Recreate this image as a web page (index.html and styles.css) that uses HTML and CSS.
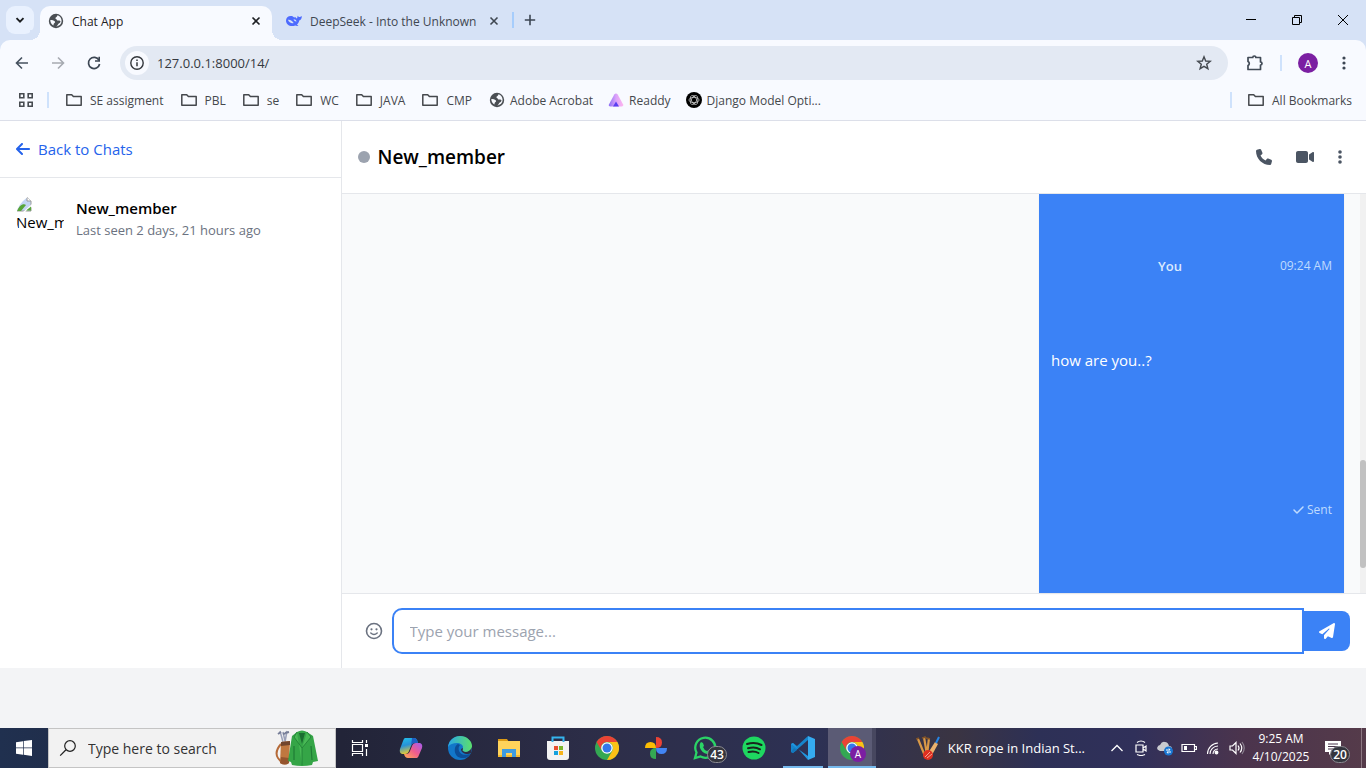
FILE: index.html
```html
<!DOCTYPE html>
<html lang="en">
<head>
<meta charset="utf-8">
<title>Chat App</title>
<link rel="stylesheet" href="styles.css">
</head>
<body>
<svg class="defs" aria-hidden="true">
  <symbol id="folder" viewBox="0 0 16 16"><path d="M.8 2.700h4.900l1.700 1.900h7.800v8.700H.8z" fill="none" stroke="currentColor" stroke-width="1.500" stroke-linejoin="round"/></symbol>
  <symbol id="close" viewBox="0 0 10 10"><path d="M1.500 1.500l7 7M8.500 1.500l-7 7" stroke="currentColor" stroke-width="1.600"/></symbol>
  <symbol id="globe" viewBox="0 0 16 16"><circle cx="8" cy="8" r="7.200" fill="#4b4f54"/><path d="M9.500 2.200c-.3 1.900-1.800 1.600-2.100 2.900-.2 1 1.100 1 1.500 1.900.4.900 1.500.5 2.400.4.900 0 1.400.8 1.100 1.700-.4 1.400-1.900 1.200-2.500 2.500-.2.700-.6 1.500-1.900 1.600 3.100.2 5.600-2.300 5.600-5.500 0-2.500-1.700-4.800-4.100-5.500z" fill="#f8faff"/><path d="M2.300 7.100c1.500-.3 2.900.1 4 .8 1.200.7.900 1.900-.1 2.300-.8.400-.5 1.300-.8 2.200-1.900-.9-3.100-2.900-3.100-5.300z" fill="#f8faff"/></symbol>
  <symbol id="chrome" viewBox="0 0 24 24"><circle cx="12" cy="12" r="12" fill="#34a853"/><path d="M1.600 6A12 12 0 0 1 22.400 6H12a6 6 0 0 0-5.200 9z" fill="#ea4335"/><path d="M22.400 6A12 12 0 0 1 12 24l5.200-9A6 6 0 0 0 12 6z" fill="#fbc116"/><circle cx="12" cy="12" r="5.800" fill="#fff"/><circle cx="12" cy="12" r="4.500" fill="#3478eb"/></symbol>
  <symbol id="dots" viewBox="0 0 16 16"><circle cx="8" cy="3" r="1.600"/><circle cx="8" cy="8" r="1.600"/><circle cx="8" cy="13" r="1.600"/></symbol>
</svg>

<header class="browser">
  <div class="tabs">
    <button class="tab-search" aria-label="Search tabs"><svg class="i10" viewBox="0 0 10 10"><path d="M1.500 3.200L5 6.700l3.500-3.500" fill="none" stroke="currentColor" stroke-width="1.900"/></svg></button>
    <div class="tab active"><svg class="i16"><use href="#globe"/></svg><span>Chat App</span><button aria-label="Close tab"><svg class="i10"><use href="#close"/></svg></button></div>
    <div class="tab"><svg class="i16" viewBox="0 0 16 16" fill="#4d6bfe"><path d="M0 7.500C0 4.700 2.100 2.900 5 3c1.200 0 1.900.6 2.900 1.200.7.400 1 .2.900-.5 1.100.5 1.200 1.500 2.200 1.700.5-.9.300-1.900.9-2.600.6 1 .8 1.300 1.700 1.200 1-.1 1.300-.8 2.200-.8.100 2.400-1 3.700-2.600 4.300-.2 1.900-1.100 3-2.200 3.900.5.700 1.200.8 1.800 1.100-1.300.7-2.600.4-3.500-.1C4.800 14.200 0 12.200 0 7.500z"/><path d="M1.900 6.800c2.600-.3 4.400 1.200 5.800 3.200-1.800 1-4.800-.5-5.800-3.200z" fill="#d6e2f6"/><path d="M7.500 6.300c1.700 0 2.700.8 3 2.100-.8.400-2.200-.2-3-2.100z" fill="#d6e2f6"/></svg><span>DeepSeek - Into the Unknown</span><button aria-label="Close tab"><svg class="i10"><use href="#close"/></svg></button></div>
    <span class="tab-line"></span>
    <button class="new-tab" aria-label="New tab"><svg class="i12" viewBox="0 0 12 12"><path d="M6 .8v10.400M.8 6h10.400" stroke="currentColor" stroke-width="1.600"/></svg></button>
    <div class="window-controls">
      <button aria-label="Minimize"><svg class="i12" viewBox="0 0 12 12"><path d="M1 5.500h10" stroke="currentColor"/></svg></button>
      <button aria-label="Restore"><svg class="i12" viewBox="0 0 12 12" fill="none" stroke="currentColor"><path d="M1.500 3.500h7v7h-7zM3.500 3.500v-2h7v7h-2"/></svg></button>
      <button aria-label="Close window"><svg class="i12" viewBox="0 0 12 12"><path d="M1 1l10 10M11 1L1 11" stroke="currentColor"/></svg></button>
    </div>
  </div>
  <div class="toolbar">
    <button aria-label="Back"><svg class="i16" viewBox="0 0 16 16" fill="none" stroke="#45515f" stroke-width="1.600"><path d="M14 8H2.500M8 2.500L2.500 8 8 13.500"/></svg></button>
    <button aria-label="Forward"><svg class="i16" viewBox="0 0 16 16" fill="none" stroke="#a6aab1" stroke-width="1.600"><path d="M2 8h11.500M8 2.500L13.500 8 8 13.500"/></svg></button>
    <button aria-label="Reload"><svg class="i16" viewBox="0 0 16 16"><path d="M13 5.200A5.600 5.600 0 1 0 13.600 9" fill="none" stroke="#3c4653" stroke-width="1.700"/><path d="M14 1.800v5H9V5.200h3.400V1.800z" fill="#3c4653"/></svg></button>
    <div class="address">
      <button class="site-info" aria-label="Site information"><svg class="i16" viewBox="0 0 16 16"><circle cx="8" cy="8" r="6.200" fill="none" stroke="#33373c" stroke-width="1.400"/><path d="M8 7.200v4M8 4.500v1.500" stroke="#33373c" stroke-width="1.500"/></svg></button>
      <input type="text" aria-label="Address" value="127.0.0.1:8000/14/">
      <button aria-label="Bookmark"><svg class="i16" viewBox="0 0 16 16"><path d="M8 1.800l1.700 4.200 4.600.3-3.600 3 1.200 4.400L8 11.300l-3.900 2.400 1.200-4.400-3.600-3L6.300 6z" fill="none" stroke="#454a50" stroke-width="1.400"/></svg></button>
    </div>
    <button class="extensions" aria-label="Extensions"><svg class="i18" viewBox="0 0 18 18"><path d="M2 3.500h4.800a1.500 1.500 0 0 1 3 0H14.500V8a1.500 1.500 0 0 1 0 3v4.500H2v-4a2.200 2.200 0 0 0 0-4z" fill="none" stroke="#414a56" stroke-width="1.700" stroke-linejoin="round"/></svg></button>
    <span class="bar-line"></span>
    <button class="profile">A</button>
    <button class="menu" aria-label="Browser menu"><svg class="i16" fill="#3c4653"><use href="#dots"/></svg></button>
  </div>
  <nav class="bookmarks">
    <button class="apps" aria-label="Apps"><svg class="i16" viewBox="0 0 16 16" fill="none" stroke="#474b50" stroke-width="1.600"><path d="M1.800 1.800h4v4h-4zM10.200 1.800h4v4h-4zM1.800 10.200h4v4h-4zM10.200 10.200h4v4h-4z"/></svg></button>
    <span class="bar-line"></span>
    <a href="#"><svg class="i16"><use href="#folder"/></svg>SE assigment</a>
    <a href="#"><svg class="i16"><use href="#folder"/></svg>PBL</a>
    <a href="#"><svg class="i16"><use href="#folder"/></svg>se</a>
    <a href="#"><svg class="i16"><use href="#folder"/></svg>WC</a>
    <a href="#"><svg class="i16"><use href="#folder"/></svg>JAVA</a>
    <a href="#"><svg class="i16"><use href="#folder"/></svg>CMP</a>
    <a href="#" class="site"><svg class="i16"><use href="#globe"/></svg>Adobe Acrobat</a>
    <a href="#" class="site"><svg class="i16" viewBox="0 0 16 16"><defs><linearGradient id="rd" x2="1"><stop stop-color="#8b6df5"/><stop offset=".5" stop-color="#dba2fa"/><stop offset="1" stop-color="#ffb6ee"/></linearGradient></defs><path d="M6.300 2.500q1.700-2 3.400 0l5.600 10.300q.3 1.700-1.600 1.700H2.300Q.2 14.500.8 12.700z" fill="url(#rd)"/><path d="M8 9.500l3 5H5z" fill="#5a3ff0"/></svg>Readdy</a>
    <a href="#" class="site"><svg class="i16" viewBox="0 0 16 16"><circle cx="8" cy="8" r="8" fill="#000"/><g fill="none" stroke="#d8d8d8" stroke-width=".7"><ellipse cx="8" cy="8" rx="5" ry="2.600"/><ellipse cx="8" cy="8" rx="5" ry="2.600" transform="rotate(60 8 8)"/><ellipse cx="8" cy="8" rx="5" ry="2.600" transform="rotate(120 8 8)"/></g></svg>Django Model Opti...</a>
    <div class="all"><span class="bar-line"></span><a href="#"><svg class="i16"><use href="#folder"/></svg>All Bookmarks</a></div>
  </nav>
</header>

<main class="app">
  <aside class="sidebar">
    <div class="side-top"><a href="#"><svg class="fa14" viewBox="0 0 448 512"><path d="M9.400 233.400c-12.500 12.500-12.500 32.800 0 45.300l160 160c12.500 12.500 32.800 12.500 45.300 0s12.500-32.800 0-45.300L109.200 288 416 288c17.700 0 32-14.300 32-32s-14.300-32-32-32l-306.700 0L214.600 118.600c12.500-12.500 12.500-32.800 0-45.300s-32.800-12.500-45.300 0l-160 160z"/></svg>Back to Chats</a></div>
    <div class="contact">
      <div class="avatar">
        <svg class="i16" viewBox="0 0 16 16"><path d="M1 1h10l4 4v10H1z" fill="#c3d5f4" stroke="#9a9a9a"/><path d="M11 1v4h4" fill="#fff" stroke="#9a9a9a"/><path d="M1 15c2-5 6-8 9-6l-5 6z" fill="#57a639"/><path d="M16 8L7 16h2l7-5z" fill="#fff"/><path d="M10 14.500l5-4v4z" fill="#57a639"/></svg>
        <span>New_member</span>
      </div>
      <div><h2>New_member</h2><p>Last seen 2 days, 21 hours ago</p></div>
    </div>
  </aside>
  <section class="chat">
    <header class="chat-top">
      <span class="status"></span><h1>New_member</h1>
      <div class="actions">
        <button aria-label="Call"><svg class="i16" viewBox="0 0 512 512"><path d="M164.900 24.600c-7.700-18.600-28-28.500-47.400-23.200l-88 24C12.100 30.200 0 46 0 64C0 311.400 200.600 512 448 512c18 0 33.800-12.100 38.600-29.500l24-88c5.300-19.400-4.600-39.700-23.200-47.400l-96-40c-16.300-6.800-35.200-2.100-46.300 11.600L304.700 368C234.300 334.700 177.300 277.700 144 207.300L193.300 167c13.700-11.200 18.400-30 11.600-46.300l-40-96z"/></svg></button>
        <button aria-label="Video call"><svg class="i18" viewBox="0 0 576 512"><path d="M0 128C0 92.700 28.700 64 64 64l256 0c35.300 0 64 28.700 64 64l0 256c0 35.300-28.700 64-64 64L64 448c-35.300 0-64-28.700-64-64L0 128zM559.100 99.800c10.400 5.600 16.900 16.400 16.900 28.200l0 256c0 11.800-6.500 22.600-16.900 28.200s-23 5-32.900-1.600l-96-64L416 337.100l0-17.100 0-128 0-17.100 14.200-9.500 96-64c9.800-6.500 22.400-7.200 32.900-1.600z"/></svg></button>
        <button aria-label="More"><svg class="dots-narrow" viewBox="0 0 4 16"><circle cx="2" cy="3" r="1.800"/><circle cx="2" cy="8" r="1.800"/><circle cx="2" cy="13" r="1.800"/></svg></button>
      </div>
    </header>
    <div class="messages">
      <article class="bubble">
        <div class="meta"><strong>You</strong><time>09:24 AM</time></div>
        <p>how are you..?</p>
        <div class="sent"><svg class="i11" viewBox="0 0 448 512"><path d="M438.600 105.400c12.500 12.500 12.500 32.800 0 45.300l-256 256c-12.500 12.500-32.800 12.500-45.300 0l-128-128c-12.500-12.500-12.500-32.800 0-45.300s32.800-12.500 45.300 0L160 338.700 393.400 105.400c12.500-12.500 32.800-12.500 45.300 0z"/></svg>Sent</div>
      </article>
      <div class="scroll-track"><div class="scroll-thumb"></div></div>
    </div>
    <form class="composer">
      <button type="button" class="emoji" aria-label="Emoji"><svg class="i18" viewBox="0 0 18 18"><circle cx="9" cy="9" r="7.500" fill="none" stroke="currentColor" stroke-width="1.600"/><path d="M5.800 11q3.200 3 6.400 0" fill="none" stroke="currentColor" stroke-width="1.500" stroke-linecap="round"/><circle cx="6.500" cy="7.300" r="1.100" fill="currentColor"/><circle cx="11.500" cy="7.300" r="1.100" fill="currentColor"/></svg></button>
      <input type="text" aria-label="Message" placeholder="Type your message...">
      <button type="button" class="send" aria-label="Send"><svg class="i16" viewBox="0 0 512 512"><path d="M498.100 5.600c10.100 7 15.400 19.100 13.500 31.200l-64 416c-1.500 9.700-7.400 18.200-16 23s-18.900 5.400-28 1.600L284 427.700l-68.500 74.100c-8.900 9.700-22.900 12.900-35.200 8.100S160 493.200 160 480V396.400c0-4 1.500-7.800 4.200-10.700L331.800 202.800c5.800-6.300 5.600-16-.4-22s-15.700-6.400-22-.7L106 360.800 17.700 316.600C7.100 311.300 .3 300.700 0 288.900s5.900-22.800 16.100-28.700l448-256c10.700-6.100 23.900-5.500 34 1.400z"/></svg></button>
    </form>
  </section>
</main>

<footer class="taskbar">
  <button class="task" aria-label="Start"><svg class="i16" viewBox="0 0 16 16" fill="#fff"><path d="M0 2.200L7 1.200v6.300H0zM7.700 1.100L16 0v7.500H7.700zM0 8.300h7v6.400l-7-1zM7.700 8.300H16V16l-8.300-1.200z"/></svg></button>
  <label class="search">
    <svg class="i18" viewBox="0 0 18 18"><circle cx="11" cy="7" r="5.300" fill="none" stroke="#222" stroke-width="1.200"/><path d="M7 10.800L1.200 16.600" stroke="#222" stroke-width="1.300"/></svg>
    <input type="text" aria-label="Search" placeholder="Type here to search">
    <svg class="golf" viewBox="0 0 44 36"><path d="M5 1l3 11M8 2l2 9M12 1l-2 11" stroke="#9aa0b8" stroke-width="1.500"/><path d="M3 4l3-2M8 4l3-1M10 3l4-1" stroke="#777e98" stroke-width="2"/><path d="M6 14q-7 8-3 14l4 5" fill="none" stroke="#b56a38" stroke-width="2"/><path d="M6 12l9-1-1 22q-4 3-9 0z" fill="#c07840"/><path d="M6 12l9-1v4l-9 1z" fill="#71452d"/><path d="M6 27l8 1v5q-4 3-9 0z" fill="#95552e"/><path d="M22 2q5-3 10 0l6 4 5 25-5 1-1 3q-10 2-20 0l-1-3-3-1 4-25z" fill="#35a547"/><path d="M19 30V16M37 30l-1-14" fill="none" stroke="#1f7c35" stroke-width="1.200"/><path d="M22 2l-3 5 8 11v17M32 2l4 5-9 11" fill="#48b955" stroke="#1f7c35" stroke-width=".8"/><path d="M24 3h6l-3 11z" fill="#1b6d31"/></svg>
  </label>
  <button class="task" aria-label="Task view"><svg class="i18" viewBox="0 0 18 18" fill="none" stroke="#fff" stroke-width="1.200"><path d="M1.500 1v2.500h10V1M1.500 17v-2.500h10V17M1.500 5.500h10v7h-10zM15.500 1v3M15.500 10v7"/><path d="M14 5h3v3h-3z" fill="#fff" stroke="none"/></svg></button>
  <div class="pinned">
    <button class="task" aria-label="Copilot"><svg class="i24" viewBox="0 0 24 24"><defs><linearGradient id="c1" x1="0" y1="0" x2=".3" y2="1"><stop stop-color="#23c4ed"/><stop offset=".5" stop-color="#2792d7"/><stop offset="1" stop-color="#e9cc31"/></linearGradient><linearGradient id="c2" x1="1" y1="0" x2="0" y2="1"><stop stop-color="#a35cf2"/><stop offset=".5" stop-color="#ef5c8d"/><stop offset="1" stop-color="#ffae51"/></linearGradient></defs><path d="M6 2h9q3 0 4 5h-4q-2 0-3 3l-2 5q-1 3-4 3H3q-3-1-2-5L4 5q1-3 2-3z" fill="url(#c1)"/><path d="M18 22H9q-3 0-4-4h2q3 0 4-3l2-5q1-3 4-3h4q3 1 2 5l-3 7q-1 3-2 3z" fill="url(#c2)"/><path d="M13 2h2q3 0 4 5h-4q-2 0-3 3z" fill="#1d5fc4"/></svg></button>
    <button class="task" aria-label="Edge"><svg class="i24" viewBox="0 0 24 24"><defs><linearGradient id="e1" x2="1"><stop stop-color="#2aa7e8"/><stop offset="1" stop-color="#5ce06b"/></linearGradient></defs><circle cx="12" cy="12" r="12" fill="#1277c9"/><path d="M0 11C1 4 6 0 12 0c7 0 12 5 12 10 0 4-3 6-6 6-3 0-4-1-4-2s1-1 1-3c0-2-3-4-6-4-4 0-7 1-9 4z" fill="url(#e1)"/><path d="M10 8c-5 2-5 15 6 14 3 0 5-2 6-4-3 1-9 2-11-3-1-3 0-5 1-6z" fill="#0c4e98"/><path d="M23 17c-3 2-10 1-10-4l2-1c0 2-1 2 0 3 2 2 7 1 9-4z" fill="#2d2e47"/></svg></button>
    <button class="task" aria-label="File Explorer"><svg class="i24" viewBox="0 0 24 24"><path d="M1 3h9l2 3H1z" fill="#dc9b15"/><path d="M1 5h22v16H1z" fill="#ffd35b"/><path d="M1 19h22v2H1z" fill="#f3b92e"/><path d="M5 21v-8h14v8h-4v-4H9v4z" fill="#3e9be0"/></svg></button>
    <button class="task" aria-label="Store"><svg class="i24" viewBox="0 0 24 24"><path d="M1 5h22v16q0 3-3 3H4q-3 0-3-3z" fill="#f3f3f3"/><path d="M6.500 6V1.500h11V6" fill="none" stroke="#35b4ed" stroke-width="2"/><path d="M8 10h4v4H8z" fill="#e94f2f"/><path d="M13 10h4v4h-4z" fill="#7bb72d"/><path d="M8 15h4v4H8z" fill="#16a2de"/><path d="M13 15h4v4h-4z" fill="#f8b51c"/></svg></button>
    <button class="task" aria-label="Chrome"><svg class="i24"><use href="#chrome"/></svg></button>
    <button class="task" aria-label="Photos"><svg class="i24" viewBox="0 0 24 24"><path d="M12 1q6 0 6 5.500T12 12z" fill="#ea4335"/><path d="M23 12q0 6-5.500 6T12 12z" fill="#4285f4"/><path d="M12 23q-6 0-6-5.500T12 12z" fill="#34a853"/><path d="M1 12q0-6 5.500-6T12 12z" fill="#fbbc04"/></svg></button>
    <button class="task" aria-label="WhatsApp"><svg class="i24" viewBox="0 0 24 24"><path d="M2 22l1.500-5.500A10 10 0 1 1 7.500 20.500z" fill="none" stroke="#2bd366" stroke-width="2.300"/><path d="M8 6l2 1 1 3-1 1q1 3 4 4l2-1 2 2q-1 3-4 2-5-1-7-6-1-4 1-6z" fill="#2bd366"/></svg><span class="count wa">43</span></button>
    <button class="task" aria-label="Spotify"><svg class="i24" viewBox="0 0 24 24"><circle cx="12" cy="12" r="11.500" fill="#1ed760"/><path d="M5 8q8-2.500 14.500 1M6 12.300q7-2 12 1M6.500 16q6-1.500 10 1" fill="none" stroke="#19251d" stroke-width="2" stroke-linecap="round"/></svg></button>
    <button class="task open" aria-label="VS Code"><svg class="i24" viewBox="0 0 24 24"><path d="M17 0L6 10 2 7 0 8v8l2 1 15-13z" fill="#1685cc"/><path d="M17 24L2 7 0 8l17 12z" fill="#2297df"/><path d="M17 0l7 3v18l-7 3z" fill="#35abf0"/><path d="M0 16l2 1 4-3-3-2z" fill="#1377bb"/></svg></button>
    <button class="task current" aria-label="Chrome, profile A"><svg class="i24"><use href="#chrome"/></svg><span class="mini-profile">A</span></button>
  </div>
  <div class="tray">
    <button class="news"><svg class="i24" viewBox="0 0 24 24"><path d="M2 3l7 17M8 1l3 18M13 2l-2 17" stroke="#d99947" stroke-width="2.200"/><path d="M0 3l3-1M6 2l4-1M10 2l4 1" stroke="#825326" stroke-width="1.600"/><path d="M19 6l3 2-6 11-4-2z" fill="#eab26d"/><path d="M20 7l3-6" stroke="#2586e7" stroke-width="2"/><circle cx="12" cy="19" r="5" fill="#df2f21"/><path d="M9 21l5-5M11 22l5-4" stroke="#fbc0ad" stroke-width=".8"/></svg><span>KKR rope in Indian St...</span></button>
    <button class="sys" aria-label="Hidden icons"><svg class="i14" viewBox="0 0 14 14" fill="none" stroke="#fff" stroke-width="1.300"><path d="M1.500 10L7 4.500l5.500 5.500"/></svg></button>
    <button class="sys" aria-label="Camera"><svg class="i16" viewBox="0 0 16 16" fill="none" stroke="#fff" stroke-width="1.200"><path d="M3 5h7v7H3zM10 8l3-2v5l-3-2M4 2.500Q8-.5 12 2.500M4 14.500q4 2 8 0"/></svg></button>
    <button class="sys" aria-label="OneDrive"><svg class="i16" viewBox="0 0 16 16"><path d="M3 11q-3-1-3-3 1-3 3-3 2-4 5-3 3 0 4 4 3 0 3 3v2z" fill="#c9cbd0"/><circle cx="11.500" cy="11" r="4.500" fill="#1976d2"/><path d="M9 10h4l-1-1.500M14 12h-4l1 1.500" fill="none" stroke="#fff"/></svg></button>
    <button class="sys" aria-label="Battery"><svg class="i16" viewBox="0 0 16 16"><path d="M1 4.500h12.500v7H1zM14 6.500h1.500v3H14" fill="none" stroke="#fff" stroke-width="1.200"/><path d="M3 6h3v4H3z" fill="#fff"/></svg></button>
    <button class="sys" aria-label="Wi-Fi"><svg class="i16" viewBox="0 0 16 16" fill="none" stroke="#fff" stroke-width="1.100"><path d="M8 14a5 5 0 0 1 5-5M5 14a8 8 0 0 1 8-8M2.500 14A11 11 0 0 1 13 3"/><circle cx="11.500" cy="12.500" r="1.400" fill="#fff"/></svg></button>
    <button class="sys" aria-label="Volume"><svg class="i16" viewBox="0 0 16 16" fill="none" stroke="#fff" stroke-width="1.200"><path d="M1 6h2.500L7 2.500v11L3.500 10H1zM9 5.500q2 2.500 0 5M11 3.500q3.500 4.500 0 9"/><path d="M13 2q4.500 6 0 12" stroke="#8d8492"/></svg></button>
    <div class="clock"><time>9:25 AM</time><time>4/10/2025</time></div>
    <button class="notice" aria-label="Notifications"><svg class="i16" viewBox="0 0 16 16"><path d="M0 1h16v11H7l-3 3v-3H0z" fill="#fff"/><path d="M3 4h10M3 6.500h10M3 9h7" stroke="#4b344c"/></svg><span class="count nt">20</span></button>
  </div>
</footer>
</body>
</html>
```
FILE: styles.css
```css
* { box-sizing: border-box; }
body { margin: 0; height: 100vh; display: flex; flex-direction: column; background: #f3f4f6; font-family: "Open Sans", "Noto Sans", sans-serif; font-size: 15px; color: #000; }
button, input { font: inherit; color: inherit; border: 0; padding: 0; background: none; outline: 0; }
button { display: flex; align-items: center; justify-content: center; flex: none; }
a { color: inherit; text-decoration: none; }
h1, h2, p { margin: 0; }
svg { flex: none; }
svg:not([fill]) { fill: currentColor; }
.defs { position: absolute; width: 0; height: 0; }
.i10 { width: 10px; height: 10px; }
.i11 { width: 11px; height: 12px; }
.i12 { width: 12px; height: 12px; }
.i14 { width: 14px; height: 14px; }
.i16 { width: 16px; height: 16px; }
.i18 { width: 18px; height: 18px; }
.i24 { width: 24px; height: 24px; }

/* Browser frame */
.browser { background: #d6e2f6; border-bottom: 1px solid #dcdfe9; font-size: 12px; flex: none; }
.tabs { height: 40px; display: flex; align-items: center; padding-left: 6px; }
.tab-search { width: 28px; height: 28px; border-radius: 9px; background: #e9f1fe; color: #1b1d20; margin-right: 6px; }
.tab { height: 34px; width: 232px; align-self: flex-end; display: flex; align-items: center; gap: 8px; padding: 0 11px 4px 8px; color: #3f4751; }
.tab + .tab { padding-left: 14px; width: 238px; }
.tab.active { position: relative; background: #f8faff; border-radius: 10px 10px 0 0; color: #1e2024; }
.tab.active::before, .tab.active::after { content: ""; position: absolute; bottom: 0; width: 10px; height: 10px; }
.tab.active::before { right: 100%; background: radial-gradient(circle at 0 0, #d6e2f6 10px, #f8faff 10px); }
.tab.active::after { left: 100%; background: radial-gradient(circle at 100% 0, #d6e2f6 10px, #f8faff 10px); }
.tab span { flex: 1; white-space: nowrap; }
.tab-line { width: 2px; height: 16px; background: #a6cdfc; margin-left: 2px; }
.new-tab { width: 32px; color: #3c4653; }
.window-controls { margin-left: auto; display: flex; }
.window-controls button { width: 46px; height: 40px; }
.toolbar { height: 40px; display: flex; align-items: center; background: #f8faff; border-radius: 10px 10px 0 0; padding: 6px 4px 0; }
.toolbar > button { width: 36px; height: 34px; }
.address { flex: 1; height: 34px; border-radius: 17px; background: #e3e9f3; display: flex; align-items: center; margin: 0 9px 0 8px; padding: 0 16px 0 5px; }
.site-info { width: 24px; height: 24px; border-radius: 50%; background: #f8faff; margin-right: 8px; }
.address input { flex: 1; min-width: 0; font-size: 13px; color: #35393f; }
.bar-line { width: 2px; height: 16px; background: #cfe2fc; }
.toolbar .bar-line { margin-left: 7px; }
.toolbar .profile { width: 20px; height: 20px; border-radius: 50%; background: #7b1fa2; color: #fff; font-size: 11px; margin: 0 8px 0 16px; }
.bookmarks { height: 40px; display: flex; align-items: center; background: #f8faff; color: #45484d; padding: 0 14px 0 18px; gap: 17px; white-space: nowrap; }
.apps { margin-right: -4px; }
.bookmarks a { display: flex; align-items: center; gap: 8px; }
.bookmarks a.site { gap: 5px; }
.site + .site { margin-left: -2px; }
.all { margin-left: auto; display: flex; align-items: center; gap: 16px; }

/* Chat application */
.app { flex: 1; min-height: 0; display: flex; background: #fff; margin-bottom: 60px; }
.sidebar { width: 25%; border-right: 1px solid #e5e7eb; }
.side-top { padding: 16px; border-bottom: 1px solid #e5e7eb; }
.side-top a { display: flex; align-items: center; gap: 8px; line-height: 24px; color: #2563eb; }
.fa14 { width: 14px; height: 16px; }
.contact { display: flex; align-items: center; gap: 12px; padding: 16px; }
.avatar { width: 48px; height: 48px; border-radius: 50%; overflow: hidden; padding-top: 2px; line-height: 20px; }
.avatar svg { display: block; }
.avatar span { display: block; overflow: hidden; }
.contact h2 { font-size: 15px; font-weight: 600; line-height: 24px; }
.contact p { font-size: 13px; line-height: 20px; color: #6b7280; }
.chat { flex: 1; min-width: 0; display: flex; flex-direction: column; }
.chat-top { height: 73px; border-bottom: 1px solid #e5e7eb; display: flex; align-items: center; gap: 8px; padding: 0 24px 0 16px; flex: none; }
.status { width: 12px; height: 12px; border-radius: 50%; background: #9ca3af; }
.chat-top h1 { font-size: 19px; font-weight: 600; line-height: 28px; }
.actions { margin-left: auto; display: flex; gap: 24px; color: #4b5563; }
.dots-narrow { width: 4px; height: 16px; }
.messages { flex: 1; min-height: 0; background: #f9fafb; display: flex; justify-content: flex-end; gap: 16px; }
.bubble { width: 305px; background: #3b82f6; color: #fff; padding: 62px 12px; box-shadow: 0 1px 2px #0000000d; }
.meta { display: flex; justify-content: flex-end; gap: 98px; line-height: 20px; }
.meta strong { font-size: 13px; font-weight: 600; color: #dbeafe; }
.meta time, .sent { font-size: 12px; color: #bfdbfe; }
.bubble p { line-height: 24px; padding: 72px 0 129px; }
.sent { display: flex; align-items: center; justify-content: flex-end; gap: 3px; line-height: 18px; }
.scroll-track { width: 6px; background: #f1f1f1; padding-top: 266px; }
.scroll-thumb { height: 108px; border-radius: 3px; background: #c1c1c1; }
.composer { display: flex; align-items: center; padding: 14px 16px; border-top: 1px solid #e5e7eb; }
.emoji { width: 32px; height: 32px; color: #6b7280; margin-right: 2px; }
.composer input { flex: 1; min-width: 0; height: 46px; border: 2px solid #3b82f6; border-radius: 10px 0 0 10px; padding: 0 16px; }
.composer input::placeholder { color: #9ca3af; }
.send { width: 46px; height: 40px; border-radius: 0 8px 8px 0; background: #3b82f6; color: #fff; }

/* Desktop taskbar */
.taskbar { height: 40px; flex: none; display: flex; color: #fff; background: linear-gradient(90deg, #20304f 0, #222438 25%, #2d2e49 45%, #2d3154 60%, #3a3442 70%, #2d3056 76%, #30305a 83%, #4b344d 91%, #553b4a 100%); }
.task { width: 48px; height: 40px; position: relative; }
.search { width: 288px; background: #f2f2f2; border: 1px solid #c4c4c4; display: flex; align-items: center; padding: 0 16px 0 10px; gap: 11px; color: #333; }
.search input { flex: 1; min-width: 0; font-size: 14px; }
.search input::placeholder { color: #333; }
.golf { width: 44px; height: 36px; }
.pinned { display: flex; gap: 1px; margin-left: 3px; }
.open { background: linear-gradient(#76b9ed, #76b9ed) center bottom / 40px 2px no-repeat; }
.current { background: #5b5b75; box-shadow: inset 0 -2px #76b9ed, inset -4px 0 #47475f; }
.count { position: absolute; height: 17px; min-width: 20px; border: 1px solid #8a8a91; border-radius: 9px; background: #34353e; color: #fff; font-size: 12px; font-weight: 600; line-height: 15px; text-align: center; }
.wa { left: 26px; top: 18px; }
.nt { left: 17px; top: 18px; }
.mini-profile { position: absolute; left: 22px; top: 18px; width: 16px; height: 16px; border-radius: 50%; background: #7b1fa2; font-size: 10px; line-height: 16px; }
.tray { margin-left: auto; margin-right: 4px; display: flex; align-items: center; font-size: 13px; border-right: 1px solid #8c7882; }
.news { gap: 8px; margin-right: 20px; }
.sys { width: 24px; height: 40px; }
.clock { width: 64px; display: flex; flex-direction: column; align-items: center; font-size: 12px; line-height: 18px; }
.notice { position: relative; width: 40px; height: 40px; margin-right: 8px; }
```
